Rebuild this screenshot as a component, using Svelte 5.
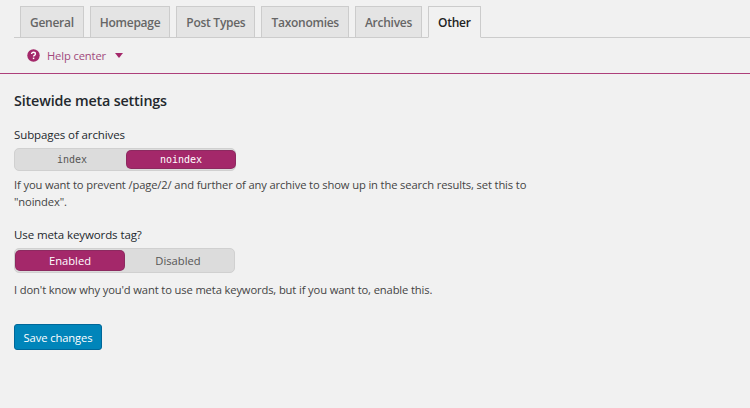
<script>
	const tabs = ['General', 'Homepage', 'Post Types', 'Taxonomies', 'Archives', 'Other'];
	const active = 'Other';
</script>

<div class="page">
	<nav class="tabs">
		{#each tabs as tab}
			<span class="tab" class:active={tab === active}>{tab}</span>
		{/each}
	</nav>

	<div class="help">
		<svg width="13" height="13" viewBox="0 0 13 13" aria-hidden="true">
			<circle cx="6.5" cy="6.5" r="6.2" fill="#a4286a" />
			<path d="M4.6 5.1c0-1.1.9-1.8 1.9-1.8s1.9.6 1.9 1.6c0 1.5-1.8 1.4-1.8 2.7" fill="none" stroke="#fff" stroke-width="1.4" />
			<rect x="5.8" y="8.6" width="1.5" height="1.5" fill="#fff" />
		</svg>
		<span class="help-label">Help center</span>
		<span class="caret"></span>
	</div>

	<main>
		<h2>Sitewide meta settings</h2>

		<div class="field first">
			<div class="label">Subpages of archives</div>
			<div class="toggle mono">
				<span class="opt">index</span>
				<span class="opt on">noindex</span>
			</div>
			<p>If you want to prevent /page/2/ and further of any archive to show up in the search results, set this to<br />"noindex".</p>
		</div>

		<div class="field second">
			<div class="label">Use meta keywords tag?</div>
			<div class="toggle tall">
				<span class="opt on">Enabled</span>
				<span class="opt">Disabled</span>
			</div>
			<p>I don't know why you'd want to use meta keywords, but if you want to, enable this.</p>
		</div>

		<button type="button">Save changes</button>
	</main>
</div>

<style>
	:global(body) {
		margin: 0;
		background: #f1f1f1;
	}

	.page {
		width: 750px;
		height: 408px;
		overflow: hidden;
		background: #f1f1f1;
		font-family: "Open Sans", "Liberation Sans", sans-serif;
		font-size: 11.2px;
		color: #444;
	}

	.tabs {
		display: flex;
		gap: 6px;
		height: 31px;
		margin: 6px 0 0 14px;
		padding-left: 6px;
		border-bottom: 1px solid #ccc;
	}

	.tab {
		box-sizing: border-box;
		height: 32px;
		padding: 0 9px;
		display: flex;
		align-items: center;
		border: 1px solid #ccc;
		background: #e4e4e4;
		color: #666;
		font-size: 12px;
		font-weight: 600;
		letter-spacing: -0.27px;
	}

	.tab.active {
		background: #f1f1f1;
		border-bottom-color: #f1f1f1;
		color: #222;
	}

	.help {
		display: flex;
		align-items: center;
		height: 35px;
		padding-left: 27px;
		border-bottom: 1px solid #ad3f7a;
		color: #a4286a;
	}

	.help-label {
		margin-left: 7px;
		font-size: 11.2px;
		letter-spacing: -0.13px;
		color: #a14a7c;
	}

	.caret {
		margin-left: 9px;
		border-style: solid;
		border-width: 5px 4px 0;
		border-color: #a4286a transparent transparent;
	}

	main {
		padding-left: 14px;
	}

	h2 {
		margin: 17px 0 0;
		font-size: 14.3px;
		line-height: 20px;
		font-weight: 600;
		letter-spacing: -0.15px;
		color: #23282d;
	}

	.field.first {
		margin-top: 16px;
	}

	.field.second {
		margin-top: 17px;
	}

	.label {
		font-size: 11.5px;
		line-height: 16px;
		font-weight: 500;
		letter-spacing: -0.1px;
		color: #23282d;
	}

	.toggle {
		box-sizing: border-box;
		display: flex;
		width: 222px;
		height: 23px;
		margin-top: 5px;
		padding: 2px;
		background: #dcdcdc;
		border: 1px solid #d0d0d0;
		border-radius: 5px;
	}

	.toggle.tall {
		width: 221px;
		height: 25px;
		padding-left: 1px;
	}

	.toggle.mono {
		padding-right: 0;
		font-family: "DejaVu Sans Mono", "Liberation Mono", monospace;
		font-size: 10px;
	}

	.opt {
		flex: 1;
		display: flex;
		align-items: center;
		justify-content: center;
		color: #555;
		border-radius: 4px;
	}

	.opt.on {
		flex: 0 0 108px;
		background: #a4286a;
		color: #fff;
		box-shadow: 0 0 0 1px #8d2a60;
	}

	p {
		margin: 5px 0 0;
		line-height: 17px;
		letter-spacing: -0.13px;
		color: #444;
	}

	.second p {
		margin-top: 8px;
	}

	button {
		display: block;
		box-sizing: border-box;
		width: 88px;
		height: 26px;
		margin-top: 26px;
		padding: 0;
		background: #0085ba;
		border: 1px solid #006799;
		border-radius: 3px;
		color: #fff;
		font-family: inherit;
		font-size: 11.2px;
		letter-spacing: -0.1px;
	}
</style>
